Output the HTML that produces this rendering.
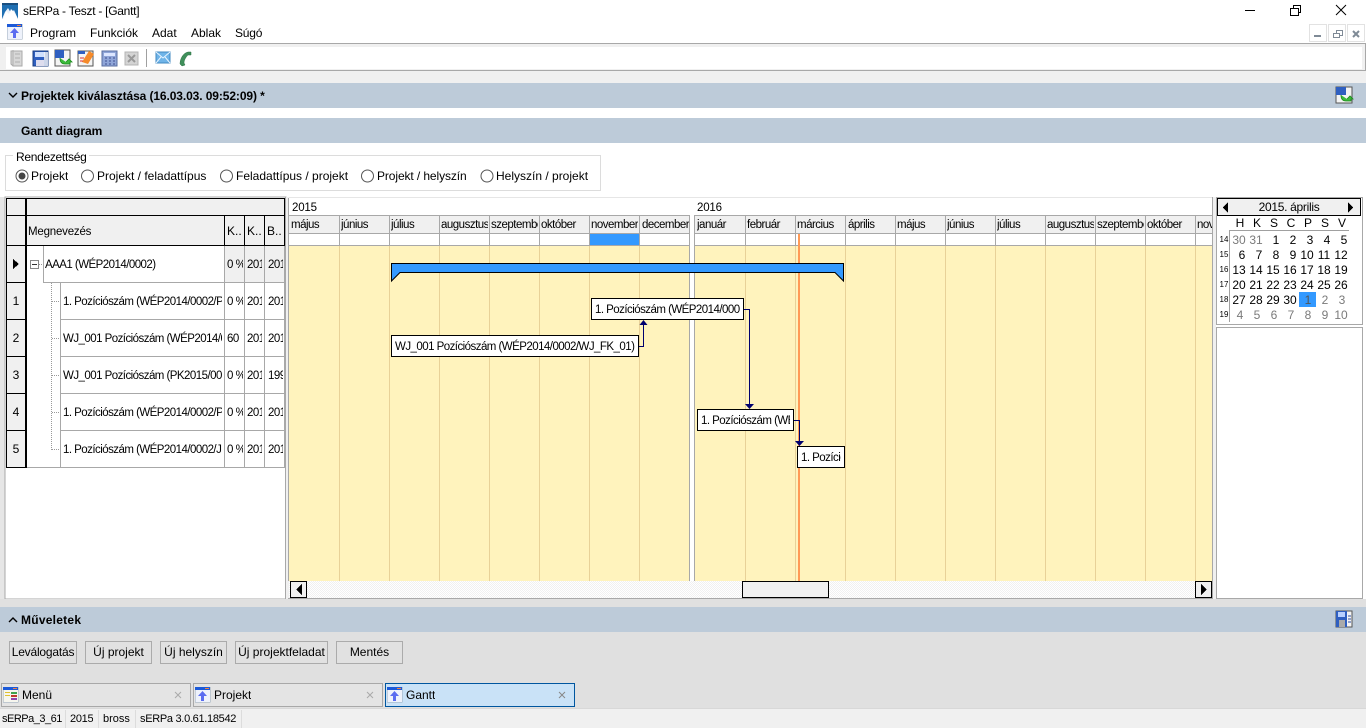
<!DOCTYPE html>
<html><head><meta charset="utf-8"><title>sERPa - Teszt - [Gantt]</title>
<style>
html,body{margin:0;padding:0;width:1366px;height:728px;overflow:hidden;background:#fff}
body{font-family:"Liberation Sans",sans-serif;font-size:12px;color:#000;position:relative}
.t{position:absolute;white-space:nowrap;overflow:hidden;height:16px;line-height:16px}
.b{font-weight:bold}
.c{text-align:center}
.n{font-size:11.5px;letter-spacing:-.54px;margin-top:1px}
.m{font-size:11.5px;letter-spacing:-.5px}
.r{margin-top:1px}
.s{font-size:11px;letter-spacing:-.3px}
.box{position:absolute;height:20px;line-height:20px;border:1px solid #000;background:#fff;white-space:nowrap}
.box span{position:absolute;left:3px;right:3px;top:1px;height:19px;overflow:hidden;display:block;font-size:11.5px;letter-spacing:-.54px}
svg.bg{position:absolute;left:0;top:0}
.d{position:absolute;width:18px;text-align:center;height:15px;line-height:15px;white-space:nowrap}
.g{color:#7a7a7a}
.w{position:absolute;font-size:8px;line-height:10px;height:10px;left:1219px;width:10px;text-align:center}
.btn{position:absolute;top:641px;height:21px;border:1px solid #ababab;text-align:center;line-height:21px;background:#e1e1e1;white-space:nowrap}
</style></head><body>
<svg class="bg" width="1366" height="728" viewBox="0 0 1366 728" shape-rendering="crispEdges">
<defs>
<pattern id="h" width="2" height="2" patternUnits="userSpaceOnUse"><rect width="2" height="2" fill="#fff"/><rect width="1" height="1" fill="#f0f0f0"/><rect x="1" y="1" width="1" height="1" fill="#f0f0f0"/></pattern>
</defs>
<rect width="1366" height="728" fill="#fff"/>
<!-- toolbar -->
<rect x="0" y="43" width="1366" height="28" fill="#a8a8a8"/>
<rect x="0" y="44" width="1365" height="26" fill="#f0f0f0"/>
<rect x="6" y="47" width="1356" height="22" fill="#fff"/>
<rect x="0" y="71" width="1366" height="12" fill="#f0f0f0"/>
<rect x="146" y="49" width="1" height="18" fill="#a0a0a0"/>
<!-- MDI inner buttons -->
<rect x="1309.5" y="24.5" width="17" height="17" fill="#fff" stroke="#e2e2e2"/>
<rect x="1328.5" y="24.5" width="17" height="17" fill="#fff" stroke="#e2e2e2"/>
<rect x="1347.5" y="24.5" width="17" height="17" fill="#fff" stroke="#e2e2e2"/>
<rect x="1314" y="35" width="7" height="2" fill="#7f8a96"/>
<rect x="1336.5" y="30.5" width="6" height="5" fill="none" stroke="#7f8a96"/><rect x="1333.5" y="33.5" width="6" height="4" fill="#fff" stroke="#7f8a96"/>
<path d="M1353 31l6 6M1359 31l-6 6" stroke="#7f8a96" stroke-width="2" fill="none" shape-rendering="auto"/>
<!-- window buttons -->
<rect x="1245" y="10" width="10" height="1" fill="#000"/>
<rect x="1293.5" y="5.5" width="7" height="7" fill="none" stroke="#000"/><rect x="1290.5" y="8.5" width="8" height="7" fill="#fff" stroke="#000"/>
<path d="M1336 5l10 10M1346 5l-10 10" stroke="#000" fill="none" shape-rendering="auto"/>
<!-- section bands -->
<rect x="0" y="83" width="1366" height="25" fill="#bdcbd9"/>
<rect x="0" y="108" width="1366" height="10" fill="#fff"/>
<rect x="0" y="118" width="1366" height="25" fill="#bdcbd9"/>
<path d="M9 93l4 4 4-4" fill="none" stroke="#000" stroke-width="1.4" shape-rendering="auto"/>
<!-- group box -->
<rect x="0" y="143" width="1366" height="54" fill="#fff"/>
<rect x="5.5" y="155.5" width="595" height="35" fill="none" stroke="#dcdcdc"/>
<rect x="13" y="150" width="76" height="12" fill="#fff"/>
<g fill="#fff" stroke="#555" shape-rendering="auto"><circle cx="22" cy="176" r="6"/><circle cx="87.5" cy="176" r="6"/><circle cx="226.5" cy="176" r="6"/><circle cx="367.500" cy="176" r="6"/><circle cx="487" cy="176" r="6"/></g>
<circle cx="22" cy="176" r="3.5" fill="#444" shape-rendering="auto"/>
<!-- main area -->
<rect x="0" y="191" width="1366" height="6" fill="#fff"/>
<rect x="0" y="197" width="5" height="403" fill="#e6e6e6"/>
<rect x="0" y="197" width="1366" height="1" fill="#e6e6e6"/>
<rect x="5" y="197" width="281" height="402" fill="#fff" stroke="#a8a8a8" stroke-width="1"/>
<rect x="286" y="197" width="3" height="402" fill="#f0f0f0"/>
<rect x="285" y="197" width="1" height="402" fill="#a8a8a8"/>
<!-- left grid -->
<rect x="6" y="198" width="279" height="48" fill="#f0f0f0"/>
<rect x="6" y="198" width="20" height="270" fill="#f0f0f0"/>
<rect x="225" y="246" width="60" height="37" fill="#f0f0f0"/>
<rect x="6" y="198" width="279" height="1" fill="#000"/>
<rect x="6" y="198" width="1" height="270" fill="#000"/>
<rect x="25" y="198" width="2" height="270" fill="#000"/>
<rect x="6" y="215" width="279" height="1" fill="#000"/>
<rect x="6" y="245" width="279" height="1" fill="#000"/>
<rect x="284" y="198" width="1" height="48" fill="#000"/>
<g fill="#000"><rect x="6" y="282" width="20" height="1"/><rect x="6" y="319" width="20" height="1"/><rect x="6" y="356" width="20" height="1"/><rect x="6" y="393" width="20" height="1"/><rect x="6" y="430" width="20" height="1"/><rect x="6" y="467" width="20" height="1"/></g>
<g fill="#000"><rect x="224" y="215" width="1" height="30"/><rect x="244" y="215" width="1" height="30"/><rect x="264" y="215" width="1" height="30"/></g>
<g fill="#a8a8a8">
<rect x="43" y="246" width="1" height="37"/><rect x="60" y="283" width="1" height="185"/>
<rect x="224" y="246" width="1" height="222"/><rect x="244" y="246" width="1" height="222"/><rect x="264" y="246" width="1" height="222"/><rect x="284" y="246" width="1" height="222"/>
<rect x="43" y="282" width="242" height="1"/>
<rect x="60" y="319" width="225" height="1"/><rect x="60" y="356" width="225" height="1"/><rect x="60" y="393" width="225" height="1"/><rect x="60" y="430" width="225" height="1"/><rect x="27" y="467" width="258" height="1"/>
</g>
<path d="M13 259l6 5-6 5z" fill="#000"/>
<rect x="30.500" y="260.500" width="8" height="8" fill="#fff" stroke="#888"/><rect x="32" y="264" width="5" height="1" fill="#333"/>
<path d="M39 264.500h4M51.500 283v167M52 301.500h8M52 338.500h8M52 375.500h8M52 412.500h8M52 449.500h8" stroke="#999" stroke-dasharray="1 1" fill="none"/>
<!-- gantt -->
<rect x="289" y="198" width="924" height="401" fill="#fff"/>
<rect x="289" y="216" width="924" height="18" fill="#f0f0f0"/>
<rect x="289" y="234" width="924" height="12" fill="#fff"/>
<rect x="289" y="246" width="924" height="335" fill="#fff3bd"/>
<rect x="590" y="234" width="49" height="11" fill="#3399ff"/>
<g fill="#e8d198">
<rect x="339" y="246" width="1" height="335"/><rect x="389" y="246" width="1" height="335"/><rect x="439" y="246" width="1" height="335"/><rect x="489" y="246" width="1" height="335"/><rect x="539" y="246" width="1" height="335"/><rect x="589" y="246" width="1" height="335"/><rect x="639" y="246" width="1" height="335"/>
<rect x="745" y="246" width="1" height="335"/><rect x="795" y="246" width="1" height="335"/><rect x="845" y="246" width="1" height="335"/><rect x="895" y="246" width="1" height="335"/><rect x="945" y="246" width="1" height="335"/><rect x="995" y="246" width="1" height="335"/><rect x="1045" y="246" width="1" height="335"/><rect x="1095" y="246" width="1" height="335"/><rect x="1145" y="246" width="1" height="335"/><rect x="1195" y="246" width="1" height="335"/>
</g>
<g fill="#a8a8a8">
<rect x="289" y="215" width="401" height="1"/><rect x="694" y="215" width="519" height="1"/>
<rect x="289" y="233" width="401" height="1"/><rect x="694" y="233" width="519" height="1"/>
<rect x="289" y="245" width="401" height="1"/><rect x="694" y="245" width="519" height="1"/>
<rect x="339" y="215" width="1" height="30"/><rect x="389" y="215" width="1" height="30"/><rect x="439" y="215" width="1" height="30"/><rect x="489" y="215" width="1" height="30"/><rect x="539" y="215" width="1" height="30"/><rect x="589" y="215" width="1" height="30"/><rect x="639" y="215" width="1" height="30"/>
<rect x="745" y="215" width="1" height="30"/><rect x="795" y="215" width="1" height="30"/><rect x="845" y="215" width="1" height="30"/><rect x="895" y="215" width="1" height="30"/><rect x="945" y="215" width="1" height="30"/><rect x="995" y="215" width="1" height="30"/><rect x="1045" y="215" width="1" height="30"/><rect x="1095" y="215" width="1" height="30"/><rect x="1145" y="215" width="1" height="30"/><rect x="1195" y="215" width="1" height="30"/>
<rect x="288" y="198" width="1" height="383"/>
<rect x="689" y="215" width="1" height="366"/><rect x="694" y="215" width="1" height="366"/>
<rect x="1212" y="197" width="1" height="402"/>
<rect x="288" y="598" width="925" height="1"/>
</g>
<rect x="690" y="216" width="4" height="365" fill="#fff"/>
<rect x="798" y="234" width="2" height="347" fill="#ff9a56"/>
<!-- summary bar -->
<path d="M391.500 263.500H843.500V281L835 272.500H400L391.500 281Z" fill="#3399ff" stroke="#000" shape-rendering="auto"/>
<!-- connectors -->
<path d="M638 346.500H643.500V324M743 309.500H749.500V405M793 420.500H799.500V442" fill="none" stroke="#00006e" stroke-width="1"/>
<path d="M639.500 325l4-5 4 5z" fill="#00006e" shape-rendering="auto"/>
<path d="M745 404h9l-4.500 5zM795 441h9l-4.500 5z" fill="#00006e" shape-rendering="auto"/>
<!-- scrollbar -->
<rect x="289" y="581" width="923" height="17" fill="url(#h)"/>
<rect x="290.500" y="581.500" width="16" height="16" fill="#f0f0f0" stroke="#000"/>
<rect x="1195.500" y="581.500" width="16" height="16" fill="#f0f0f0" stroke="#000"/>
<rect x="742.500" y="581.500" width="86" height="16" fill="#f0f0f0" stroke="#000"/>
<path d="M302 584v11l-6-5.500z" fill="#000"/><path d="M1201 584v11l6-5.500z" fill="#000"/>
<!-- calendar -->
<rect x="1213" y="197" width="3" height="402" fill="#f0f0f0"/>
<rect x="1216.500" y="197.500" width="146" height="127" fill="#fff" stroke="#a8a8a8"/>
<rect x="1217.500" y="198.500" width="143" height="17" fill="#f0f0f0" stroke="#000"/>
<path d="M1228 202v11l-5-5.500z" fill="#000"/><path d="M1348 202v11l5-5.500z" fill="#000"/>
<rect x="1229" y="230" width="120" height="1" fill="#a0a0a0"/><rect x="1229" y="230" width="1" height="92" fill="#a0a0a0"/>
<rect x="1299" y="292" width="17" height="15" fill="#3399ff"/>
<rect x="1216.500" y="327.500" width="146" height="271" fill="#fff" stroke="#a8a8a8"/>
<rect x="1363" y="197" width="3" height="403" fill="#fff"/>
<!-- bottom -->
<rect x="0" y="599" width="1366" height="110" fill="#e0e0e0"/>
<rect x="0" y="607" width="1366" height="25" fill="#bdcbd9"/>
<path d="M9 622l4-4 4 4" fill="none" stroke="#000" stroke-width="1.400" shape-rendering="auto"/>
<!-- tabs -->
<rect x="1.500" y="683.500" width="189" height="23" fill="#e4e4e4" stroke="#a8a8a8"/>
<rect x="193.500" y="683.500" width="189" height="23" fill="#e4e4e4" stroke="#a8a8a8"/>
<rect x="385.500" y="683.500" width="189" height="23" fill="#c9e2f7" stroke="#00569f"/>
<path d="M175 692l6 6M181 692l-6 6M367 692l6 6M373 692l-6 6" stroke="#aaa" fill="none" shape-rendering="auto"/>
<path d="M559 692l6 6M565 692l-6 6" stroke="#888" fill="none" shape-rendering="auto"/>
<!-- status -->
<rect x="0" y="708" width="1366" height="1" fill="#d8d8d8"/>
<rect x="0" y="709" width="1366" height="19" fill="#f0f0f0"/>
<g fill="#dcdcdc"><rect x="65" y="710" width="1" height="18"/><rect x="98" y="710" width="1" height="18"/><rect x="135" y="710" width="1" height="18"/><rect x="241" y="710" width="1" height="18"/></g>

<!-- app icon -->
<rect x="2" y="3" width="16" height="16" fill="#eaf1fb"/>
<path d="M2 19V5h16v14l-4-9-3 3-3-5-3 4z" fill="#1f6fb2" shape-rendering="auto"/>
<path d="M2 3h16v2H2z" fill="#1a4f80"/>
<path d="M3 19l3-8 3 3 2-5 3 3 4 7z" fill="#fff" shape-rendering="auto"/>
<!-- window icons -->
<g id="ic1"><rect x="7" y="24" width="15" height="15" fill="#eef2fb" stroke="#9ab" stroke-width=".5"/><rect x="7" y="24" width="15" height="3" fill="#1c5ad8"/><rect x="17" y="25" width="4" height="1" fill="#f08040"/><path d="M14.500 28l4.500 5h-3v5h-3v-5h-3z" fill="#5a6cf0" shape-rendering="auto"/></g>
<g><rect x="195" y="687" width="15" height="15" fill="#eef2fb" stroke="#9ab" stroke-width=".5"/><rect x="195" y="687" width="15" height="3" fill="#1c5ad8"/><rect x="205" y="688" width="4" height="1" fill="#f08040"/><path d="M202.500 691l4.500 5h-3v5h-3v-5h-3z" fill="#5a6cf0" shape-rendering="auto"/></g>
<g><rect x="387" y="687" width="15" height="15" fill="#eef2fb" stroke="#9ab" stroke-width=".5"/><rect x="387" y="687" width="15" height="3" fill="#1c5ad8"/><rect x="397" y="688" width="4" height="1" fill="#f08040"/><path d="M394.500 691l4.500 5h-3v5h-3v-5h-3z" fill="#5a6cf0" shape-rendering="auto"/></g>
<g><rect x="3" y="687" width="15" height="15" fill="#f6f6ee" stroke="#9ab" stroke-width=".5"/><rect x="3" y="687" width="15" height="3" fill="#1c5ad8"/><rect x="13" y="688" width="4" height="1" fill="#f08040"/><rect x="11" y="692" width="6" height="2" fill="#3fa34d"/><rect x="11" y="695" width="6" height="2" fill="#c0392b"/><rect x="11" y="698" width="6" height="2" fill="#8e44ad"/><rect x="5" y="692" width="5" height="1" fill="#e0c030"/><rect x="5" y="695" width="5" height="1" fill="#e0c030"/></g>
<!-- toolbar icons -->
<g shape-rendering="auto">
<path d="M11 51h11v15H13l-2-2z" fill="#d8d8d8" stroke="#aaa"/><path d="M13 50v16M15 54h5M15 58h5M15 62h5" stroke="#b0b0b0" fill="none"/>
<rect x="33" y="51" width="15" height="15" fill="#2f5fc0" stroke="#1a3c80"/><rect x="35" y="52" width="10" height="5" fill="#cfe0ff"/><rect x="36" y="60" width="8" height="6" fill="#dde"/><rect x="44" y="52" width="4" height="14" fill="#f4f4f4" opacity=".8"/>
<rect x="55" y="50" width="15" height="16" fill="#f4f4f4" stroke="#555"/><rect x="55" y="50" width="9" height="8" fill="#2f5fc0"/><path d="M60 58q0 6 5 6h5v-2h2l-3-3-3 3" fill="#3dbb3d" stroke="#1a8a1a" stroke-width=".8"/>
<rect x="78" y="51" width="15" height="15" fill="#f4f4f4" stroke="#555"/><path d="M82 62l7-11 5 3-6 10z" fill="#f58a2a"/><rect x="78" y="51" width="7" height="3" fill="#2f5fc0"/><path d="M80 58h4M80 61h3" stroke="#e03030"/>
<rect x="102" y="51" width="15" height="15" fill="#8fa5d8" stroke="#5a6ea0"/><rect x="104" y="53" width="11" height="3" fill="#dce6ff"/><path d="M105 58h2M109 58h2M113 58h2M105 61h2M109 61h2M113 61h2M105 64h2M109 64h2M113 64h2" stroke="#3f4f90"/>
<rect x="125" y="52" width="13" height="13" fill="#d4d4d4" stroke="#b4b4b4"/><path d="M128 55l7 7M135 55l-7 7" stroke="#999" stroke-width="2"/>
<rect x="156" y="52" width="14" height="11" fill="#6fb4e8" stroke="#4088c0"/><path d="M156 52l7 6 7-6M156 63l5-6M170 63l-5-6" fill="none" stroke="#e8f4ff"/>
<path d="M180 64c0-5 3-11 8-12l3 0 0 3-3 0c-2 2-4 5-4 8l1 2-3 1z" fill="#3f8f5a" stroke="#2e7044" stroke-width=".5"/>
<!-- right band icons -->
<rect x="1336" y="87" width="16" height="16" fill="#f4f4f4" stroke="#555"/><rect x="1336" y="87" width="10" height="8" fill="#2f5fc0"/><path d="M1341 95q0 6 5 6h5v-2h2l-3-3-3 3" fill="#3dbb3d" stroke="#1a8a1a" stroke-width=".8"/>
<rect x="1336" y="611" width="16" height="16" fill="#f4f4f4" stroke="#555"/><rect x="1336" y="611" width="11" height="16" fill="#2f5fc0"/><rect x="1338" y="612" width="7" height="5" fill="#b8d0ff"/><rect x="1339" y="620" width="6" height="7" fill="#aaa"/><path d="M1348 616h3M1348 619h3M1348 622h3" stroke="#3050a0"/>
</g>
</svg>

<!-- title/menu -->
<div class="t" style="left:23px;top:3px;letter-spacing:-.27px">sERPa - Teszt - [Gantt]</div>
<div class="t" style="left:30px;top:25px">Program</div>
<div class="t" style="left:90px;top:25px">Funkciók</div>
<div class="t" style="left:152px;top:25px">Adat</div>
<div class="t" style="left:191px;top:25px">Ablak</div>
<div class="t" style="left:235px;top:25px;letter-spacing:-.2px">Súgó</div>
<div class="t b" style="left:21px;top:88px;letter-spacing:-.1px">Projektek kiválasztása (16.03.03. 09:52:09) *</div>
<div class="t b" style="left:21px;top:123px">Gantt diagram</div>
<div class="t" style="left:16px;top:149px;letter-spacing:-.3px">Rendezettség</div>
<div class="t" style="left:31px;top:168px">Projekt</div>
<div class="t" style="left:97px;top:168px">Projekt / feladattípus</div>
<div class="t" style="left:236px;top:168px">Feladattípus / projekt</div>
<div class="t" style="left:377px;top:168px;letter-spacing:-.1px">Projekt / helyszín</div>
<div class="t" style="left:496px;top:168px">Helyszín / projekt</div>

<!-- left grid text -->
<div class="t m r" style="left:28px;top:223px;letter-spacing:-.2px">Megnevezés</div>
<div class="t" style="left:227px;top:223px;width:17px">K..</div>
<div class="t" style="left:247px;top:223px;width:17px">K..</div>
<div class="t" style="left:267px;top:223px;width:17px">B..</div>
<div class="t n" style="left:45px;top:256px;width:178px">AAA1 (WÉP2014/0002)</div>
<div class="t n" style="left:63px;top:293px;width:159px">1. Pozíciószám (WÉP2014/0002/PK_01)</div>
<div class="t n" style="left:63px;top:330px;width:159px">WJ_001 Pozíciószám (WÉP2014/0002)</div>
<div class="t n" style="left:63px;top:367px;width:159px">WJ_001 Pozíciószám (PK2015/0001)</div>
<div class="t n" style="left:63px;top:404px;width:159px">1. Pozíciószám (WÉP2014/0002/PK_02)</div>
<div class="t n" style="left:63px;top:441px;width:159px">1. Pozíciószám (WÉP2014/0002/JK_01)</div>
<div class="t m r" style="left:227px;top:256px;width:16px">0 %</div><div class="t m r" style="left:247px;top:256px;width:15px">2015</div><div class="t m r" style="left:268px;top:256px;width:15px">2015</div>
<div class="t m r" style="left:227px;top:293px;width:16px">0 %</div><div class="t m r" style="left:247px;top:293px;width:15px">2015</div><div class="t m r" style="left:268px;top:293px;width:15px">2015</div>
<div class="t m r" style="left:227px;top:330px;width:16px">60</div><div class="t m r" style="left:247px;top:330px;width:15px">2015</div><div class="t m r" style="left:268px;top:330px;width:15px">2015</div>
<div class="t m r" style="left:227px;top:367px;width:16px">0 %</div><div class="t m r" style="left:247px;top:367px;width:15px">2015</div><div class="t m r" style="left:268px;top:367px;width:15px">1999</div>
<div class="t m r" style="left:227px;top:404px;width:16px">0 %</div><div class="t m r" style="left:247px;top:404px;width:15px">2015</div><div class="t m r" style="left:268px;top:404px;width:15px">2015</div>
<div class="t m r" style="left:227px;top:441px;width:16px">0 %</div><div class="t m r" style="left:247px;top:441px;width:15px">2015</div><div class="t m r" style="left:268px;top:441px;width:15px">2015</div>
<div class="t c" style="left:6px;top:293px;width:20px">1</div>
<div class="t c" style="left:6px;top:330px;width:20px">2</div>
<div class="t c" style="left:6px;top:367px;width:20px">3</div>
<div class="t c" style="left:6px;top:404px;width:20px">4</div>
<div class="t c" style="left:6px;top:441px;width:20px">5</div>

<!-- gantt header -->
<div class="t m r" style="left:292px;top:199px;letter-spacing:-.2px">2015</div>
<div class="t m r" style="left:697px;top:199px;letter-spacing:-.2px">2016</div>
<div class="t m" style="left:291px;top:217px;width:47px">május</div>
<div class="t m" style="left:341px;top:217px;width:47px">június</div>
<div class="t m" style="left:391px;top:217px;width:47px">július</div>
<div class="t m" style="left:441px;top:217px;width:47px">augusztus</div>
<div class="t m" style="left:491px;top:217px;width:47px">szeptember</div>
<div class="t m" style="left:541px;top:217px;width:47px">október</div>
<div class="t m" style="left:591px;top:217px;width:47px">november</div>
<div class="t m" style="left:642px;top:217px;width:47px">december</div>
<div class="t m" style="left:697px;top:217px;width:47px">január</div>
<div class="t m" style="left:747px;top:217px;width:47px">február</div>
<div class="t m" style="left:797px;top:217px;width:47px">március</div>
<div class="t m" style="left:848px;top:217px;width:47px">április</div>
<div class="t m" style="left:897px;top:217px;width:47px">május</div>
<div class="t m" style="left:947px;top:217px;width:47px">június</div>
<div class="t m" style="left:997px;top:217px;width:47px">július</div>
<div class="t m" style="left:1047px;top:217px;width:47px">augusztus</div>
<div class="t m" style="left:1097px;top:217px;width:47px">szeptember</div>
<div class="t m" style="left:1147px;top:217px;width:47px">október</div>
<div class="t m" style="left:1197px;top:217px;width:15px">november</div>

<!-- gantt tasks -->
<div class="box" style="left:591px;top:298px;width:151px"><span>1. Pozíciószám (WÉP2014/0002/PK_01)</span></div>
<div class="box" style="left:391px;top:335px;width:246px"><span>WJ_001 Pozíciószám (WÉP2014/0002/WJ_FK_01)</span></div>
<div class="box" style="left:697px;top:409px;width:95px"><span>1. Pozíciószám (WÉP2014)</span></div>
<div class="box" style="left:797px;top:446px;width:46px"><span>1. Pozíciószám</span></div>

<!-- calendar -->
<div class="t c" style="left:1232px;top:199px;width:114px;letter-spacing:-.3px">2015. április</div>
<div class="d" style="left:1231px;top:216px">H</div><div class="d" style="left:1248px;top:216px">K</div><div class="d" style="left:1265px;top:216px">S</div><div class="d" style="left:1282px;top:216px">C</div><div class="d" style="left:1299px;top:216px">P</div><div class="d" style="left:1316px;top:216px">S</div><div class="d" style="left:1333px;top:216px">V</div>
<div class="w" style="top:235px">14</div><div class="w" style="top:250px">15</div><div class="w" style="top:265px">16</div><div class="w" style="top:280px">17</div><div class="w" style="top:295px">18</div><div class="w" style="top:310px">19</div>
<div class="d g" style="left:1230px;top:233px">30</div><div class="d g" style="left:1247px;top:233px">31</div><div class="d" style="left:1267px;top:233px">1</div><div class="d" style="left:1284px;top:233px">2</div><div class="d" style="left:1301px;top:233px">3</div><div class="d" style="left:1318px;top:233px">4</div><div class="d" style="left:1335px;top:233px">5</div>
<div class="d" style="left:1233px;top:248px">6</div><div class="d" style="left:1250px;top:248px">7</div><div class="d" style="left:1267px;top:248px">8</div><div class="d" style="left:1284px;top:248px">9</div><div class="d" style="left:1298px;top:248px">10</div><div class="d" style="left:1315px;top:248px">11</div><div class="d" style="left:1332px;top:248px">12</div>
<div class="d" style="left:1230px;top:263px">13</div><div class="d" style="left:1247px;top:263px">14</div><div class="d" style="left:1264px;top:263px">15</div><div class="d" style="left:1281px;top:263px">16</div><div class="d" style="left:1298px;top:263px">17</div><div class="d" style="left:1315px;top:263px">18</div><div class="d" style="left:1332px;top:263px">19</div>
<div class="d" style="left:1230px;top:278px">20</div><div class="d" style="left:1247px;top:278px">21</div><div class="d" style="left:1264px;top:278px">22</div><div class="d" style="left:1281px;top:278px">23</div><div class="d" style="left:1298px;top:278px">24</div><div class="d" style="left:1315px;top:278px">25</div><div class="d" style="left:1332px;top:278px">26</div>
<div class="d" style="left:1230px;top:293px">27</div><div class="d" style="left:1247px;top:293px">28</div><div class="d" style="left:1264px;top:293px">29</div><div class="d" style="left:1281px;top:293px">30</div><div class="d g" style="left:1299px;top:293px;color:#555">1</div><div class="d g" style="left:1316px;top:293px">2</div><div class="d g" style="left:1333px;top:293px">3</div>
<div class="d g" style="left:1231px;top:308px">4</div><div class="d g" style="left:1248px;top:308px">5</div><div class="d g" style="left:1265px;top:308px">6</div><div class="d g" style="left:1282px;top:308px">7</div><div class="d g" style="left:1299px;top:308px">8</div><div class="d g" style="left:1316px;top:308px">9</div><div class="d g" style="left:1332px;top:308px">10</div>

<!-- bottom -->
<div class="t b" style="left:21px;top:612px;letter-spacing:.25px">Műveletek</div>
<div class="btn" style="left:9px;width:66px;letter-spacing:-.2px">Leválogatás</div>
<div class="btn" style="left:85px;width:65px">Új projekt</div>
<div class="btn" style="left:160px;width:65px">Új helyszín</div>
<div class="btn" style="left:235px;width:91px">Új projektfeladat</div>
<div class="btn" style="left:336px;width:65px">Mentés</div>
<div class="t" style="left:22px;top:687px">Menü</div>
<div class="t" style="left:214px;top:687px">Projekt</div>
<div class="t" style="left:406px;top:687px">Gantt</div>
<div class="t s" style="left:2px;top:711px;letter-spacing:-.5px">sERPa_3_61</div>
<div class="t s" style="left:70px;top:711px">2015</div>
<div class="t s" style="left:103px;top:711px;letter-spacing:0">bross</div>
<div class="t s" style="left:140px;top:711px">sERPa 3.0.61.18542</div>
</body></html>
